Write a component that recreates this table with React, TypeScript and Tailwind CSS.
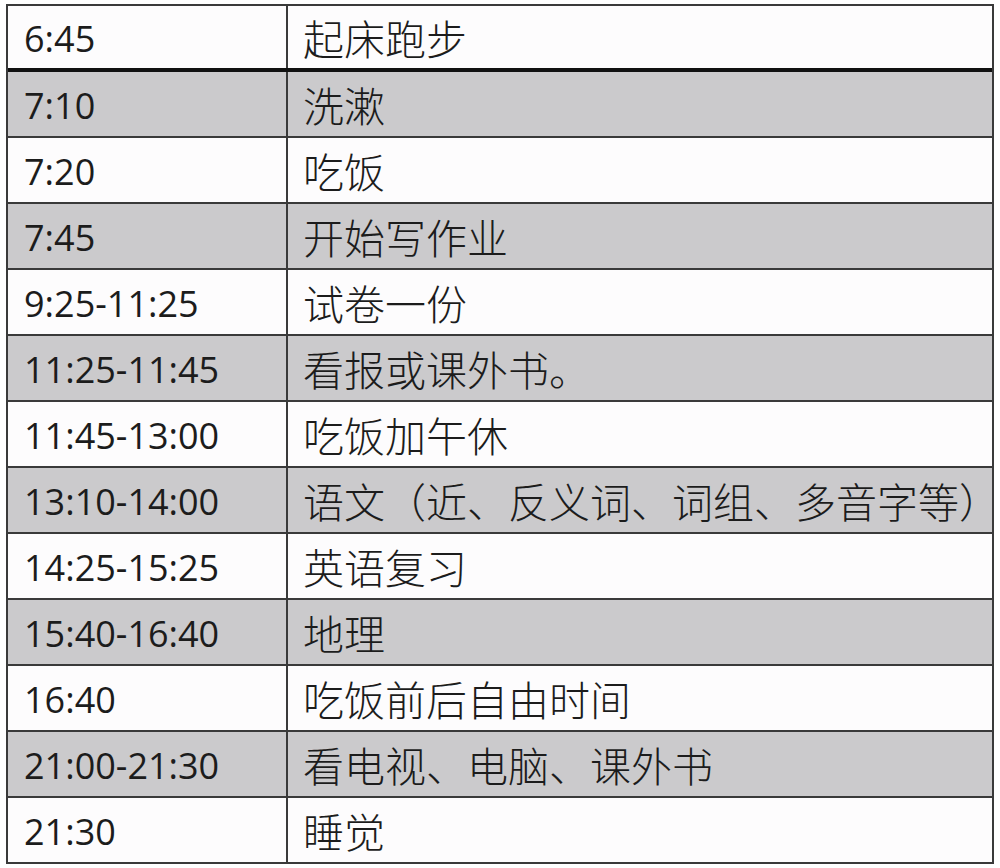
import React from 'react';

type Row = { time: string; task: string };

const rows: Row[] = [
  { time: '6:45', task: '起床跑步' },
  { time: '7:10', task: '洗漱' },
  { time: '7:20', task: '吃饭' },
  { time: '7:45', task: '开始写作业' },
  { time: '9:25-11:25', task: '试卷一份' },
  { time: '11:25-11:45', task: '看报或课外书。' },
  { time: '11:45-13:00', task: '吃饭加午休' },
  { time: '13:10-14:00', task: '语文（近、反义词、词组、多音字等）' },
  { time: '14:25-15:25', task: '英语复习' },
  { time: '15:40-16:40', task: '地理' },
  { time: '16:40', task: '吃饭前后自由时间' },
  { time: '21:00-21:30', task: '看电视、电脑、课外书' },
  { time: '21:30', task: '睡觉' },
];

export default function App() {
  return (
    <div className="w-[1000px] h-[868px] bg-white pt-[4px] pl-[6px]">
      {/* Schedule table */}
      <div
        className="w-[988px] border-2 border-[#3a3a3a] text-[#1c1c1c]"
        style={{ fontFamily: '"Open Sans", "Noto Sans CJK SC", sans-serif' }}
      >
        {rows.map((row, i) => (
          <div
            key={row.time}
            className={`grid grid-cols-[280px_1fr] ${
              i === 0
                ? 'h-[66px] border-b-4 border-[#111]'
                : i === rows.length - 1
                ? 'h-[64px]'
                : 'h-[66px] border-b-2 border-[#3a3a3a]'
            } ${i % 2 === 1 ? 'bg-[#cbcacc]' : 'bg-[#fdfcfd]'}`}
          >
            <div className="flex items-center border-r-2 border-[#3a3a3a] pl-[16px] pt-[3px] text-[36px] leading-none">
              {row.time}
            </div>
            <div
              className="flex items-center pl-[15px] text-[41px] leading-none font-light"
              style={{ fontFamily: '"Noto Sans CJK SC", sans-serif' }}
            >
              {row.task}
            </div>
          </div>
        ))}
      </div>
    </div>
  );
}
